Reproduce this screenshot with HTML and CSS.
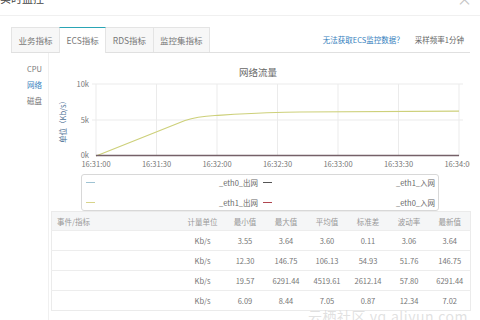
FILE: index.html
```html
<!DOCTYPE html>
<html lang="zh-CN">
<head>
    <meta charset="UTF-8">
    <meta name="viewport" content="width=device-width, initial-scale=1.0">
    <title>实时监控</title>
    <link rel="stylesheet" href="styles.css">
</head>
<body>
    <div class="dialog">
        <!-- Header -->
        <div class="dialog-head">
            <span class="dialog-title">实时监控</span>
            <span class="dialog-close">×</span>
        </div>

        <!-- Tabs -->
        <div class="tabbar">
            <div class="tab">业务指标</div>
            <div class="tab active">ECS指标</div>
            <div class="tab">RDS指标</div>
            <div class="tab">监控集指标</div>
            <div class="tabbar-extra">
                <a class="help-link" href="#">无法获取ECS监控数据？</a>
                <span>采样频率1分钟</span>
            </div>
        </div>

        <div class="content">
            <ul class="side-menu">
                <li>CPU</li>
                <li class="current">网络</li>
                <li>磁盘</li>
            </ul>

            <div class="main">
                <svg class="chart" viewBox="49 53 421 120" width="421" height="120">
                    <text class="chart-title" x="258" y="76">网络流量</text>

                    <g class="grid">
                        <line x1="92" y1="84" x2="463" y2="84"/>
                        <line x1="92" y1="120" x2="463" y2="120"/>
                        <line x1="156.5" y1="84" x2="156.5" y2="156"/>
                        <line x1="217" y1="84" x2="217" y2="156"/>
                        <line x1="277.5" y1="84" x2="277.5" y2="156"/>
                        <line x1="338" y1="84" x2="338" y2="156"/>
                        <line x1="398.5" y1="84" x2="398.5" y2="156"/>
                        <line x1="459" y1="84" x2="459" y2="156"/>
                        <line x1="96" y1="84" x2="96" y2="156"/>
                    </g>

                    <g class="y-labels">
                        <text x="89" y="87">10k</text>
                        <text x="89" y="123">5k</text>
                        <text x="89" y="157.5">0k</text>
                    </g>
                    <text class="y-title" transform="translate(66 120) rotate(-90)">单位（Kb/s）</text>

                    <g class="x-labels">
                        <text x="96" y="166.5">16:31:00</text>
                        <text x="156.5" y="166.5">16:31:30</text>
                        <text x="217" y="166.5">16:32:00</text>
                        <text x="277.5" y="166.5">16:32:30</text>
                        <text x="338" y="166.5">16:33:00</text>
                        <text x="398.5" y="166.5">16:33:30</text>
                        <text x="459" y="166.5">16:34:00</text>
                    </g>

                    <path class="series-eth1-out" d="M96 156 L185 120.5 C195 117 205 116 215 115.5 C240 114 270 112 300 112 L459 111.2"/>
                    <line class="series-flat" x1="96" y1="155.5" x2="459" y2="155.5"/>
                </svg>

                <div class="legend">
                    <span class="dash dash-eth0-out"></span>
                    <span class="legend-label">_eth0_出网</span>
                    <span class="dash dash-eth1-in"></span>
                    <span class="legend-label">_eth1_入网</span>
                    <span class="dash dash-eth1-out"></span>
                    <span class="legend-label">_eth1_出网</span>
                    <span class="dash dash-eth0-in"></span>
                    <span class="legend-label">_eth0_入网</span>
                </div>

                <table class="stats">
                    <colgroup>
                        <col class="col-name">
                        <col class="col-unit">
                        <col class="col-num"><col class="col-num"><col class="col-num">
                        <col class="col-num"><col class="col-num"><col class="col-num">
                    </colgroup>
                    <thead>
                        <tr>
                            <th class="name">事件/指标</th>
                            <th>计量单位</th>
                            <th>最小值</th>
                            <th>最大值</th>
                            <th>平均值</th>
                            <th>标准差</th>
                            <th>波动率</th>
                            <th>最新值</th>
                        </tr>
                    </thead>
                    <tbody>
                        <tr><td></td><td>Kb/s</td><td>3.55</td><td>3.64</td><td>3.60</td><td>0.11</td><td>3.06</td><td>3.64</td></tr>
                        <tr><td></td><td>Kb/s</td><td>12.30</td><td>146.75</td><td>106.13</td><td>54.93</td><td>51.76</td><td>146.75</td></tr>
                        <tr><td></td><td>Kb/s</td><td>19.57</td><td>6291.44</td><td>4519.61</td><td>2612.14</td><td>57.80</td><td>6291.44</td></tr>
                        <tr><td></td><td>Kb/s</td><td>6.09</td><td>8.44</td><td>7.05</td><td>0.87</td><td>12.34</td><td>7.02</td></tr>
                    </tbody>
                </table>
            </div>
        </div>

        <div class="watermark">云栖社区 yq.aliyun.com</div>
    </div>
</body>
</html>
```

FILE: styles.css
```css
/* General */
body {
    margin: 0;
    padding: 0;
    font-family: "Noto Sans CJK SC", "Noto Sans", sans-serif;
    color: #777;
    background: #fff;
    overflow: hidden;
}

.dialog {
    position: relative;
    height: 320px;
    overflow: hidden;
}

/* Header */
.dialog-head {
    height: 15px;
    border-bottom: 1px solid #f0f0f0;
    display: flex;
    justify-content: space-between;
}

.dialog-title {
    margin-top: -7px;
    font-size: 11px;
    line-height: 11px;
    color: #444;
}

.dialog-close {
    margin-top: -9px;
    margin-right: 8px;
    font-size: 15px;
    line-height: 15px;
    color: #c4c4c4;
}

/* Tabs */
.tabbar {
    display: flex;
    height: 25px;
    margin: 11px 10px 0 11px;
    border-bottom: 1px solid #e0e0e0;
}

.tab {
    box-sizing: border-box;
    height: 25px;
    padding: 0 6.5px;
    margin-right: -1px;
    border: 1px solid #e4e4e4;
    border-bottom: none;
    background: #f7f7f7;
    font-size: 8.5px;
    line-height: 24px;
    color: #777;
}

.tab.active {
    height: 26px;
    margin-bottom: -1px;
    position: relative;
    background: #fff;
    border-top-color: #2aa5b5;
}

.tabbar-extra {
    margin-left: auto;
    padding-right: 6px;
    display: flex;
    align-items: center;
    gap: 11px;
    font-size: 7.5px;
    color: #666;
}

.help-link {
    color: #3580bd;
    text-decoration: none;
}

/* Content */
.content {
    display: flex;
    margin-left: 11px;
    height: 268px;
}

.side-menu {
    box-sizing: border-box;
    width: 38px;
    margin: 0;
    padding: 8px 6px 0 0;
    list-style: none;
    border-right: 1px solid #f0f0f0;
    text-align: right;
    font-size: 7.5px;
    line-height: 16px;
    color: #777;
}

.side-menu .current {
    color: #3580bd;
}

.main {
    width: 421px;
}

/* Chart */
.chart {
    display: block;
}

.chart text {
    font-family: "Noto Sans CJK SC", "Noto Sans", sans-serif;
    font-size: 7.5px;
    fill: #777;
}

.chart .chart-title {
    font-size: 9.5px;
    fill: #666;
    text-anchor: middle;
}

.grid line {
    stroke: #ebebeb;
    stroke-width: 1;
}

.y-labels text {
    text-anchor: end;
}

.x-labels text {
    text-anchor: middle;
}

.chart .y-title {
    text-anchor: middle;
    fill: #4f7296;
}

.series-eth1-out {
    fill: none;
    stroke: #cdd07a;
    stroke-width: 1.2;
}

.series-flat {
    stroke: #756068;
    stroke-width: 1.6;
}

/* Legend */
.legend {
    box-sizing: border-box;
    width: 358px;
    height: 37px;
    margin: 1px 0 0 32px;
    padding: 0 3px 0 4px;
    border: 1px solid #d8d8d8;
    border-radius: 3px;
    display: grid;
    grid-template-columns: 9px 1fr 9px 1fr;
    grid-auto-rows: 14px;
    row-gap: 6px;
    column-gap: 5px;
    align-content: start;
    align-items: center;
    font-size: 7.5px;
    color: #666;
}

.legend-label {
    text-align: right;
}

.dash {
    height: 1px;
}

.dash-eth0-out { background: #9fc3d3; }
.dash-eth1-in { background: #555; }
.dash-eth1-out { background: #d8d48a; }
.dash-eth0-in { background: #b0454f; }

/* Table */
.stats {
    width: 417px;
    margin-left: 2px;
    table-layout: fixed;
    border-collapse: collapse;
    border: 1px solid #ebebeb;
    font-size: 7.5px;
    color: #777;
}

.col-name { width: 129px; }
.col-unit { width: 44px; }
.col-num { width: 41px; }

.stats th {
    height: 18px;
    padding: 0;
    background: #f5f6f7;
    font-weight: normal;
    color: #999;
    text-align: center;
}

.stats th.name {
    text-align: left;
    padding-left: 5px;
}

.stats td {
    height: 19px;
    padding: 0;
    text-align: center;
    border-top: 1px solid #ededed;
}

/* Watermark */
.watermark {
    position: absolute;
    right: 12px;
    bottom: -6px;
    font-size: 14px;
    letter-spacing: 0.5px;
    color: rgba(200, 200, 200, 0.55);
}
```
